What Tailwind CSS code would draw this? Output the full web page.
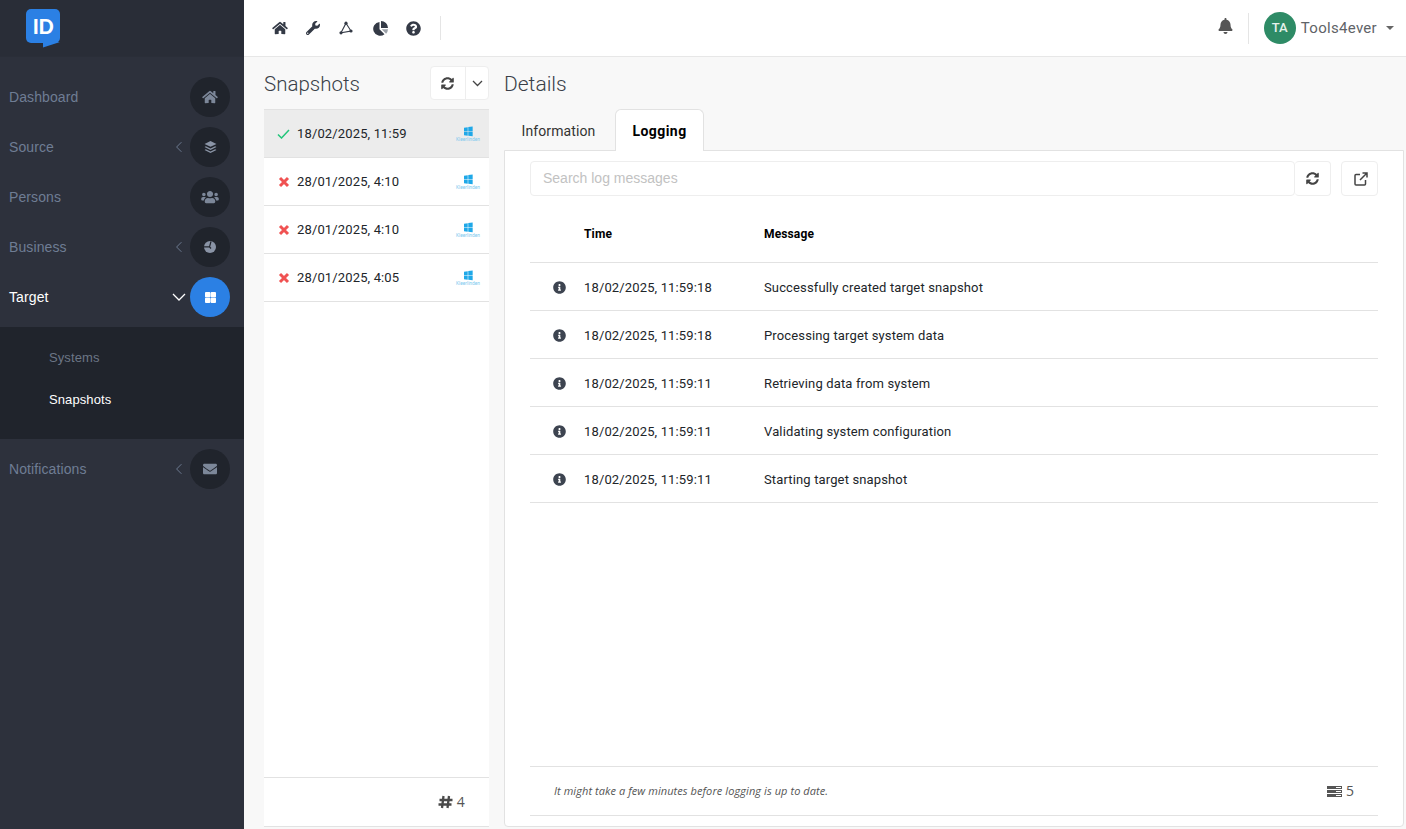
<!DOCTYPE html>
<html lang="en">
<head>
<meta charset="UTF-8">
<title>Snapshots</title>
<script src="https://cdn.jsdelivr.net/npm/@tailwindcss/browser@4"></script>
</head>
<body class="h-[829px] w-[1406px] overflow-hidden bg-[#f8f8f8] font-['Roboto',sans-serif] text-[13px] tracking-[0.14px] text-[#212529]">

<svg class="hidden">
  <symbol id="home" viewBox="0 0 576 512"><path fill="currentColor" d="M280.37 148.26L96 300.11V464a16 16 0 0 0 16 16l112.06-.29a16 16 0 0 0 15.92-16V368a16 16 0 0 1 16-16h64a16 16 0 0 1 16 16v95.64a16 16 0 0 0 16 16.05L464 480a16 16 0 0 0 16-16V300L295.67 148.26a12.19 12.19 0 0 0-15.3 0zM571.6 251.47L488 182.56V44.05a12 12 0 0 0-12-12h-56a12 12 0 0 0-12 12v72.61L318.47 43a48 48 0 0 0-61 0L4.34 251.47a12 12 0 0 0-1.6 16.9l25.5 31A12 12 0 0 0 45.15 301l235.22-193.74a12.19 12.19 0 0 1 15.3 0L530.9 301a12 12 0 0 0 16.9-1.6l25.5-31a12 12 0 0 0-1.7-16.93z"/></symbol>
  <symbol id="sync" viewBox="0 0 512 512"><path fill="currentColor" d="M370.72 133.28C339.458 104.008 298.888 87.962 255.848 88c-77.458.068-144.328 53.178-162.791 126.85-1.344 5.363-6.122 9.15-11.651 9.15H24.103c-7.498 0-13.194-6.807-11.807-14.176C33.933 94.924 134.813 8 256 8c66.448 0 126.791 26.136 171.315 68.685L463.03 40.97C478.149 25.851 504 36.559 504 57.941V192c0 13.255-10.745 24-24 24H345.941c-21.382 0-32.09-25.851-16.971-40.971l41.75-41.749zM32 296h134.059c21.382 0 32.09 25.851 16.971 40.971l-41.75 41.75c31.262 29.273 71.835 45.319 114.876 45.28 77.418-.07 144.315-53.144 162.787-126.849 1.344-5.363 6.122-9.15 11.651-9.15h57.304c7.498 0 13.194 6.807 11.807 14.176C478.067 417.076 377.187 504 256 504c-66.448 0-126.791-26.136-171.315-68.685L48.97 471.03C33.851 486.149 8 475.441 8 454.059V320c0-13.255 10.745-24 24-24z"/></symbol>
  <symbol id="info" viewBox="0 0 512 512"><path fill="currentColor" d="M256 8C119.043 8 8 119.083 8 256c0 136.997 111.043 248 248 248s248-111.003 248-248C504 119.083 392.957 8 256 8zm0 110c23.196 0 42 18.804 42 42s-18.804 42-42 42-42-18.804-42-42 18.804-42 42-42zm56 254c0 6.627-5.373 12-12 12h-88c-6.627 0-12-5.373-12-12v-24c0-6.627 5.373-12 12-12h12v-64h-12c-6.627 0-12-5.373-12-12v-24c0-6.627 5.373-12 12-12h64c6.627 0 12 5.373 12 12v100h12c6.627 0 12 5.373 12 12v24z"/></symbol>
  <symbol id="win" viewBox="0 0 24 18"><path fill="#1fa8e8" d="M6 3.200l5.600-.7v6H6zM12.400 2.400L19 1.500v7h-6.600zM6 9.300h5.600v6L6 14.600zM12.400 9.300H19v7l-6.600-.8z"/></symbol>
  <symbol id="cross" viewBox="0 0 12 12"><path d="M2 2l8 8M10 2l-8 8" stroke="#f05252" stroke-width="3" fill="none"/></symbol>
  <symbol id="chev-left" viewBox="0 0 10 16"><path d="M8 2L2 8l6 6" stroke="currentColor" stroke-width="1.200" fill="none"/></symbol>
</svg>

<div class="flex h-full">
  <!-- sidebar -->
  <aside class="flex w-[244px] shrink-0 flex-col bg-[#2d313c] font-['Liberation_Sans',sans-serif] text-sm tracking-[0.1px] text-[#6f7d94]">
    <div class="flex h-[57px] shrink-0 border-b border-[#2a2e38] bg-[#292d37] pl-[26px] pt-[9px]">
      <div class="relative flex h-[34px] w-[34px] items-center justify-center rounded-[5px] bg-[#2b80e4] font-['Lato',sans-serif] text-[20px] font-black tracking-[-0.5px] text-white">
        ID
        <svg class="absolute left-[17px] top-[33px] h-[6px] w-[17px]" viewBox="0 0 17 6"><path fill="#2b80e4" d="M0 0h17L0 5.500z"/></svg>
      </div>
    </div>
    <nav class="flex flex-col pt-5">
      <div class="flex h-[40px] items-center pl-[9px] pr-[14px]">
        <span class="flex-1">Dashboard</span>
        <span class="flex h-10 w-10 items-center justify-center rounded-full bg-[#20242c] text-[#7c8799]"><svg class="h-[14px] w-4"><use href="#home"/></svg></span>
      </div>
      <div class="mt-[10px] flex h-[40px] items-center pl-[9px] pr-[14px]">
        <span class="flex-1">Source</span>
        <svg class="mr-[7px] h-[14px] w-2"><use href="#chev-left"/></svg>
        <span class="flex h-10 w-10 items-center justify-center rounded-full bg-[#20242c] text-[#8a94a6]">
          <svg class="h-[13px] w-[13px]" viewBox="0 0 12 12"><path fill="currentColor" d="M6 0l5.500 2.700L6 5.400.5 2.700zM1.700 4.800L6 6.900l4.300-2.100 1.200.7L6 8.200.5 5.500zM1.700 7.600L6 9.700l4.300-2.100 1.200.7L6 11 .5 8.300z"/></svg>
        </span>
      </div>
      <div class="mt-[10px] flex h-[40px] items-center pl-[9px] pr-[14px]">
        <span class="flex-1">Persons</span>
        <span class="flex h-10 w-10 items-center justify-center rounded-full bg-[#20242c] text-[#7c8799]">
          <svg class="h-[14px] w-[18px]" viewBox="0 0 640 512"><path fill="currentColor" d="M96 224c35.300 0 64-28.700 64-64s-28.700-64-64-64-64 28.700-64 64 28.700 64 64 64zm448 0c35.300 0 64-28.700 64-64s-28.700-64-64-64-64 28.700-64 64 28.700 64 64 64zm32 32h-64c-17.600 0-33.500 7.100-45.100 18.600 40.300 22.100 68.900 62 75.100 109.400h66c17.700 0 32-14.300 32-32v-32c0-35.300-28.700-64-64-64zm-256 0c61.900 0 112-50.100 112-112S381.900 32 320 32 208 82.100 208 144s50.100 112 112 112zm76.800 32h-8.300c-20.800 10-43.900 16-68.500 16s-47.600-6-68.500-16h-8.300C179.600 288 128 339.600 128 403.200V432c0 26.500 21.500 48 48 48h288c26.500 0 48-21.500 48-48v-28.800c0-63.600-51.600-115.200-115.200-115.200zm-223.700-13.400C161.500 263.100 145.600 256 128 256H64c-35.300 0-64 28.700-64 64v32c0 17.700 14.300 32 32 32h65.900c6.300-47.400 34.900-87.300 75.200-109.400z"/></svg>
        </span>
      </div>
      <div class="mt-[10px] flex h-[40px] items-center pl-[9px] pr-[14px]">
        <span class="flex-1">Business</span>
        <svg class="mr-[7px] h-[14px] w-2"><use href="#chev-left"/></svg>
        <span class="flex h-10 w-10 items-center justify-center rounded-full bg-[#20242c] text-[#8a94a6]">
          <svg class="h-3 w-3" viewBox="0 0 12 12"><circle cx="6" cy="6" r="6" fill="currentColor"/><path d="M0 5.800h5.500l1.500 1.700M7 .5L5.500 5.800" stroke="#20242c" stroke-width="1.200" fill="none"/></svg>
        </span>
      </div>
      <div class="mt-[10px] flex h-[40px] items-center pl-[9px] pr-[14px] text-white">
        <span class="flex-1">Target</span>
        <svg class="mr-[4px] h-2 w-[14px]" viewBox="0 0 14 8"><path d="M1 1l6 6 6-6" stroke="currentColor" stroke-width="1.300" fill="none"/></svg>
        <span class="flex h-10 w-10 items-center justify-center rounded-full bg-[#2b80e4]">
          <svg class="h-[11px] w-[11px]" viewBox="0 0 12 12"><path fill="#fff" d="M1 0h3.800a1 1 0 0 1 1 1v3.800a1 1 0 0 1-1 1H1a1 1 0 0 1-1-1V1a1 1 0 0 1 1-1zM7.200 0H11a1 1 0 0 1 1 1v3.800a1 1 0 0 1-1 1H7.200a1 1 0 0 1-1-1V1a1 1 0 0 1 1-1zM1 6.200h3.800a1 1 0 0 1 1 1V11a1 1 0 0 1-1 1H1a1 1 0 0 1-1-1V7.200a1 1 0 0 1 1-1zM7.200 6.200H11a1 1 0 0 1 1 1V11a1 1 0 0 1-1 1H7.200a1 1 0 0 1-1-1V7.200a1 1 0 0 1 1-1z"/></svg>
        </span>
      </div>
      <div class="mt-[10px] flex h-[112px] flex-col bg-[#20242c] pl-[49px] pt-[10px] text-[13px]">
        <span class="flex h-[42px] items-center text-[#6c7686]">Systems</span>
        <span class="flex h-[42px] items-center text-white">Snapshots</span>
      </div>
      <div class="mt-[10px] flex h-[40px] items-center pl-[9px] pr-[14px]">
        <span class="flex-1">Notifications</span>
        <svg class="mr-[7px] h-[14px] w-2"><use href="#chev-left"/></svg>
        <span class="flex h-10 w-10 items-center justify-center rounded-full bg-[#20242c] text-[#7c8799]">
          <svg class="h-[14px] w-[14px]" viewBox="0 0 512 512"><path fill="currentColor" d="M502.300 190.800c3.900-3.100 9.700-.2 9.700 4.700V400c0 26.500-21.500 48-48 48H48c-26.500 0-48-21.500-48-48V195.600c0-5 5.700-7.800 9.700-4.700 22.400 17.400 52.100 39.500 154.100 113.600 21.100 15.400 56.700 47.800 92.200 47.600 35.700.3 71.300-32.800 92.300-47.600 102-74.100 131.600-96.300 154-113.700zM256 320c23.200.4 56.600-29.200 73.400-41.400 132.700-96.300 142.800-104.700 173.400-128.700 5.800-4.500 9.200-11.500 9.200-18.900v-19c0-26.500-21.500-48-48-48H48C21.500 64 0 85.500 0 112v19c0 7.400 3.400 14.300 9.200 18.900 30.600 23.900 40.700 32.400 173.400 128.700 16.800 12.200 50.200 41.800 73.400 41.400z"/></svg>
        </span>
      </div>
    </nav>
  </aside>

  <div class="flex min-w-0 flex-1 flex-col">
    <!-- top bar -->
    <header class="flex h-[57px] shrink-0 items-center border-b border-[#e7e7e7] bg-white pl-[28px] pr-[12px] text-[#343a46]">
      <svg class="h-[14px] w-4"><use href="#home"/></svg>
      <svg class="ml-[18px] h-[14px] w-[14px]" viewBox="0 0 512 512"><path fill="currentColor" d="M507.730 109.100c-2.240-9.030-13.540-12.090-20.120-5.510l-74.360 74.360-67.880-11.310-11.310-67.880 74.360-74.360c6.620-6.620 3.430-17.900-5.660-20.160-47.380-11.740-99.550.91-136.580 37.930-39.640 39.640-50.550 97.100-34.050 147.200L18.740 402.760c-24.990 24.990-24.990 65.510 0 90.500 24.990 24.990 65.510 24.990 90.500 0l213.210-213.210c50.120 16.710 107.470 5.680 147.370-34.220 37.070-37.070 49.700-89.320 37.910-136.730zM64 472c-13.250 0-24-10.750-24-24 0-13.260 10.750-24 24-24s24 10.740 24 24c0 13.250-10.750 24-24 24z"/></svg>
      <svg class="ml-[19px] h-[14px] w-[14px]" viewBox="0 0 14 14"><path d="M7 2.200L12 10 2 11.800z" stroke="currentColor" stroke-width="1.100" fill="none"/><circle cx="7" cy="2.200" r="1.600" fill="currentColor"/><circle cx="12" cy="10" r="1.600" fill="currentColor"/><circle cx="2" cy="11.800" r="1.600" fill="currentColor"/></svg>
      <svg class="ml-[20px] h-[15px] w-[15px]" viewBox="0 0 15 15"><path fill="currentColor" d="M6.500 1v7.200l5 5A6.900 6.900 0 1 1 6.500 1zM8 0a7 7 0 0 1 7 7H8z"/><path fill="#9aa0a8" d="M8.700 8.300H15a7 7 0 0 1-1.900 4.400z"/></svg>
      <svg class="ml-[18px] h-[15px] w-[15px]" viewBox="0 0 512 512"><path fill="currentColor" d="M504 256c0 136.997-111.043 248-248 248S8 392.997 8 256C8 119.083 119.043 8 256 8s248 111.083 248 248zM262.655 90c-54.497 0-89.255 22.957-116.549 63.758-3.536 5.286-2.353 12.415 2.715 16.258l34.699 26.310c5.205 3.947 12.621 3.008 16.665-2.122 17.864-22.658 30.113-35.797 57.303-35.797 20.429 0 45.698 13.148 45.698 32.958 0 14.976-12.363 22.667-32.534 33.976C247.128 238.528 216 254.941 216 296v4c0 6.627 5.373 12 12 12h56c6.627 0 12-5.373 12-12v-1.333c0-28.462 83.186-29.647 83.186-106.667 0-58.002-60.165-102-116.531-102zM256 338c-25.365 0-46 20.635-46 46 0 25.364 20.635 46 46 46s46-20.636 46-46c0-25.365-20.635-46-46-46z"/></svg>
      <div class="ml-[19px] h-6 w-px bg-[#e5e5e5]"></div>
      <div class="flex-1"></div>
      <svg class="-mt-1 h-4 w-[15px] text-[#555]" viewBox="0 0 448 512"><path fill="currentColor" d="M224 512c35.320 0 63.970-28.650 63.970-64H160.030c0 35.350 28.650 64 63.970 64zm215.390-149.710c-19.320-20.760-55.470-51.990-55.470-154.290 0-77.700-54.480-139.900-127.940-155.160V32c0-17.670-14.320-32-31.980-32s-31.980 14.330-31.980 32v20.840C118.560 68.100 64.080 130.300 64.080 208c0 102.300-36.150 133.530-55.470 154.290-6 6.450-8.660 14.160-8.610 21.710.11 16.400 12.980 32 32.100 32h383.800c19.120 0 32-15.600 32.100-32 .05-7.550-2.610-15.270-8.610-21.710z"/></svg>
      <div class="ml-[15px] h-[31px] w-px bg-[#e5e5e5]"></div>
      <div class="ml-[15px] flex h-8 w-8 items-center justify-center rounded-full bg-[#2e8b66] text-[13px] font-medium text-[#e6f2ec]">TA</div>
      <span class="ml-[5px] text-[15px] tracking-[0.3px] text-[#5f6368]">Tools4ever</span>
      <span class="ml-[9px] h-0 w-0 border-x-[4px] border-t-[4px] border-x-transparent border-t-[#666]"></span>
    </header>

    <div class="flex min-h-0 flex-1 pb-[2px] pl-[20px] pr-[2px]">
      <!-- snapshots list -->
      <section class="flex w-[225px] shrink-0 flex-col">
        <div class="flex h-[52px] shrink-0 items-start justify-between pt-[9px]">
          <h2 class="pt-[2px] text-[20.5px] font-light leading-[32px] tracking-normal text-[#3a3f48]">Snapshots</h2>
          <div class="flex h-[34px] w-[59px] rounded-sm border border-[#eeeeee] bg-white text-[#444]">
            <span class="flex w-[35px] items-center justify-center border-r border-[#eeeeee] pr-[1px]"><svg class="h-[13px] w-[13px]"><use href="#sync"/></svg></span>
            <span class="flex flex-1 items-center justify-center"><svg class="h-[7px] w-[11px]" viewBox="0 0 11 7"><path d="M1 1l4.500 4.500L10 1" stroke="currentColor" stroke-width="1.300" fill="none"/></svg></span>
          </div>
        </div>
        <div class="flex min-h-0 flex-1 flex-col border-b border-[#e2e2e2] bg-white">
          <div class="flex h-[49px] shrink-0 items-center border-y border-[#e2e2e2] bg-[#ececec] pl-[13px] pr-[9px]">
            <svg class="h-[10px] w-[13px]" viewBox="0 0 13 10"><path d="M1 5.500L4.500 9 12 1" stroke="#22c57a" stroke-width="1.500" fill="none"/></svg>
            <span class="ml-[7px] flex-1">18/02/2025, 11:59</span>
            <span class="flex w-6 flex-col items-center leading-none"><svg class="h-[13px] w-[16px]"><use href="#win"/></svg><span class="text-[4.800px] leading-[4px] tracking-normal text-[#7cc9ee]">Kleerlinden</span></span>
          </div>
          <div class="flex h-[48px] shrink-0 items-center border-b border-[#e2e2e2] pl-[14px] pr-[9px]">
            <svg class="h-[12px] w-[12px]"><use href="#cross"/></svg>
            <span class="ml-[7px] flex-1">28/01/2025, 4:10</span>
            <span class="flex w-6 flex-col items-center leading-none"><svg class="h-[13px] w-[16px]"><use href="#win"/></svg><span class="text-[4.800px] leading-[4px] tracking-normal text-[#7cc9ee]">Kleerlinden</span></span>
          </div>
          <div class="flex h-[48px] shrink-0 items-center border-b border-[#e2e2e2] pl-[14px] pr-[9px]">
            <svg class="h-[12px] w-[12px]"><use href="#cross"/></svg>
            <span class="ml-[7px] flex-1">28/01/2025, 4:10</span>
            <span class="flex w-6 flex-col items-center leading-none"><svg class="h-[13px] w-[16px]"><use href="#win"/></svg><span class="text-[4.800px] leading-[4px] tracking-normal text-[#7cc9ee]">Kleerlinden</span></span>
          </div>
          <div class="flex h-[48px] shrink-0 items-center border-b border-[#e2e2e2] pl-[14px] pr-[9px]">
            <svg class="h-[12px] w-[12px]"><use href="#cross"/></svg>
            <span class="ml-[7px] flex-1">28/01/2025, 4:05</span>
            <span class="flex w-6 flex-col items-center leading-none"><svg class="h-[13px] w-[16px]"><use href="#win"/></svg><span class="text-[4.800px] leading-[4px] tracking-normal text-[#7cc9ee]">Kleerlinden</span></span>
          </div>
          <div class="flex-1"></div>
          <div class="flex h-[49px] shrink-0 items-center justify-end border-t border-[#e2e2e2] pr-[24px] font-['Open_Sans',sans-serif] text-sm text-[#555]">
            <svg class="h-[14px] w-[15px]" viewBox="0 0 15 14"><path d="M5.500 1L4 13M11 1L9.500 13M1.500 5h13M.5 9.500h13" stroke="#4a4a4a" stroke-width="2.300" fill="none"/></svg>
            <span class="ml-[4px]">4</span>
          </div>
        </div>
      </section>

      <!-- details -->
      <section class="ml-[15px] flex min-w-0 flex-1 flex-col">
        <h2 class="h-[52px] shrink-0 pt-[11px] text-[21px] font-light leading-[32px] tracking-normal text-[#3a3f48]">Details</h2>
        <div class="z-10 -mb-px flex h-[42px] shrink-0 text-sm tracking-[0.2px]">
          <span class="flex w-[109px] items-center justify-center pt-[1px] tracking-[0.1px] text-[#333]">Information</span>
          <span class="ml-[2px] flex w-[89px] items-center justify-center rounded-t-md border border-b-0 border-[#e2e2e2] bg-white pt-[1px] font-bold tracking-[0.45px] text-black">Logging</span>
        </div>
        <div class="flex min-h-0 flex-1 flex-col rounded-b border border-[#e2e2e2] bg-white px-[25px] pt-[10px]">
          <div class="flex h-[35px] shrink-0">
            <div class="flex flex-1 items-center rounded-sm border border-[#eeeeee] px-3 pb-[2px] font-['Liberation_Sans',sans-serif] text-sm tracking-normal text-[#c2c2c2]">Search log messages</div>
            <span class="flex w-[36px] items-center justify-center rounded-sm border border-l-0 border-[#eeeeee] text-[#444]"><svg class="h-[13px] w-[13px]"><use href="#sync"/></svg></span>
            <span class="ml-[10px] flex w-[37px] items-center justify-center rounded-sm border border-[#eeeeee] pl-[2px] text-[#444]">
              <svg class="h-[14px] w-[14px]" viewBox="0 0 14 14"><path d="M6 2.500H2a1 1 0 0 0-1 1V12a1 1 0 0 0 1 1h8.500a1 1 0 0 0 1-1V8M8.500 1H13v4.500M13 1L6 8" stroke="currentColor" stroke-width="1.500" fill="none"/></svg>
            </span>
          </div>
          <div class="flex h-[67px] shrink-0 items-center border-b border-[#e2e2e2] pl-[54px] pt-[9px] text-xs font-bold text-black">
            <span class="w-[180px]">Time</span><span>Message</span>
          </div>
          <div class="flex h-[48px] shrink-0 items-center border-b border-[#e2e2e2] pl-[23px]">
            <svg class="mt-[2px] h-[13px] w-[13px] text-[#3d4450]"><use href="#info"/></svg>
            <span class="ml-[18px] w-[180px] pt-[2px]">18/02/2025, 11:59:18</span><span class="pt-[2px]">Successfully created target snapshot</span>
          </div>
          <div class="flex h-[48px] shrink-0 items-center border-b border-[#e2e2e2] pl-[23px]">
            <svg class="mt-[2px] h-[13px] w-[13px] text-[#3d4450]"><use href="#info"/></svg>
            <span class="ml-[18px] w-[180px] pt-[2px]">18/02/2025, 11:59:18</span><span class="pt-[2px]">Processing target system data</span>
          </div>
          <div class="flex h-[48px] shrink-0 items-center border-b border-[#e2e2e2] pl-[23px]">
            <svg class="mt-[2px] h-[13px] w-[13px] text-[#3d4450]"><use href="#info"/></svg>
            <span class="ml-[18px] w-[180px] pt-[2px]">18/02/2025, 11:59:11</span><span class="pt-[2px]">Retrieving data from system</span>
          </div>
          <div class="flex h-[48px] shrink-0 items-center border-b border-[#e2e2e2] pl-[23px]">
            <svg class="mt-[2px] h-[13px] w-[13px] text-[#3d4450]"><use href="#info"/></svg>
            <span class="ml-[18px] w-[180px] pt-[2px]">18/02/2025, 11:59:11</span><span class="pt-[2px]">Validating system configuration</span>
          </div>
          <div class="flex h-[48px] shrink-0 items-center border-b border-[#e2e2e2] pl-[23px]">
            <svg class="mt-[2px] h-[13px] w-[13px] text-[#3d4450]"><use href="#info"/></svg>
            <span class="ml-[18px] w-[180px] pt-[2px]">18/02/2025, 11:59:11</span><span class="pt-[2px]">Starting target snapshot</span>
          </div>
          <div class="flex-1"></div>
          <div class="mb-[10px] flex h-[50px] shrink-0 items-center border-y border-[#e2e2e2] pl-[24px] pr-[24px] font-['Open_Sans',sans-serif]">
            <span class="flex-1 text-[11px] italic tracking-[0.08px] text-[#555]">It might take a few minutes before logging is up to date.</span>
            <svg class="h-[11px] w-[15px]" viewBox="0 0 15 11"><path fill="#555" d="M0 0h15v3H0zM0 4h15v3H0zM0 8h15v3H0z"/><path fill="#fff" d="M9 1h5v1H9zM9 5h5v1H9zM9 9h5v1H9z"/></svg>
            <span class="ml-[4px] text-sm tracking-normal text-[#555]">5</span>
          </div>
        </div>
      </section>
    </div>
  </div>
</div>
</body>
</html>
